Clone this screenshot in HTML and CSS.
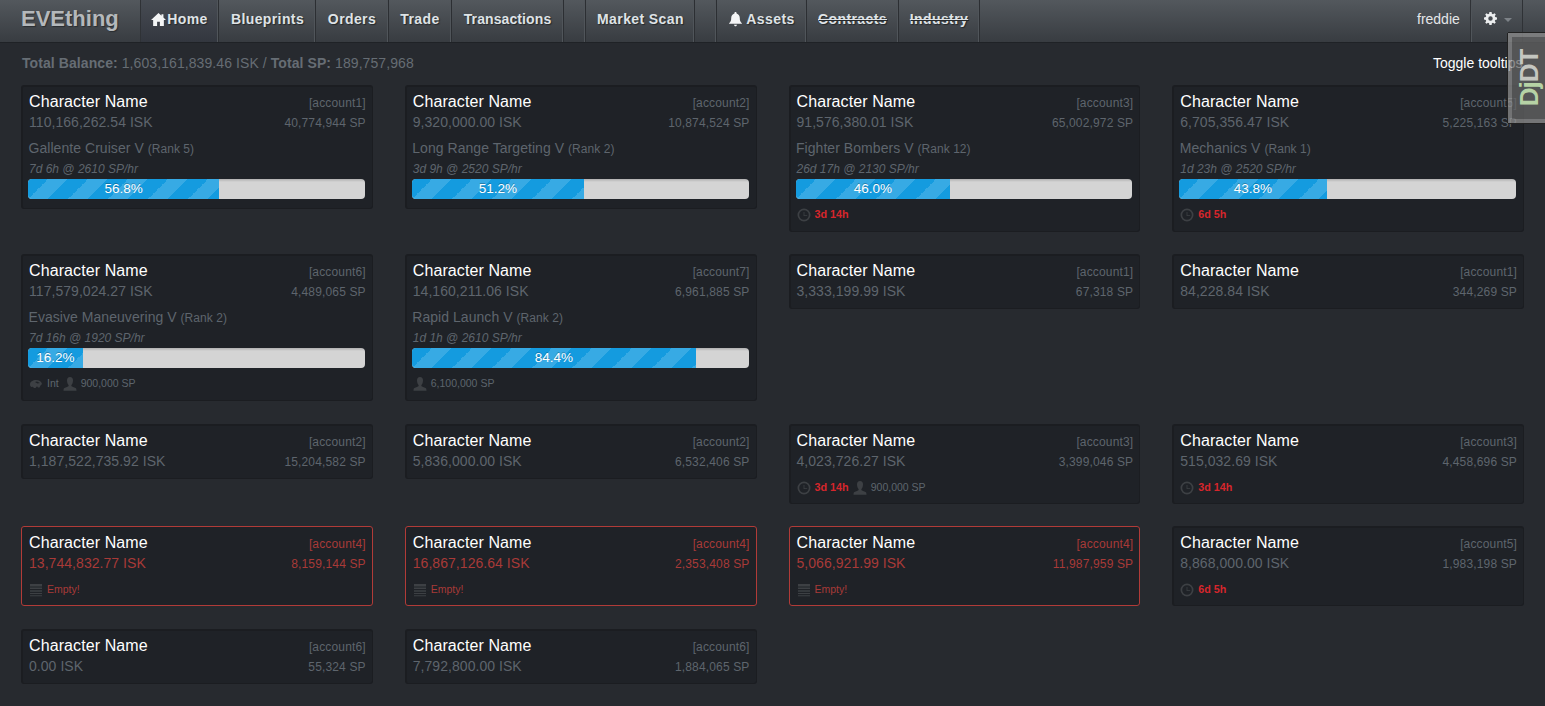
FILE: index.html
```html
<!DOCTYPE html>
<html lang="en">
<head>
    <meta charset="UTF-8">
    <title>EVEthing</title>
    <link rel="stylesheet" href="styles.css">
</head>
<body>
    <svg class="defs" width="0" height="0">
        <symbol id="i-home" viewBox="0 0 14 14"><path d="M7 1 0 7.400h2V13h3.700V9h2.600v4H12V7.400h2l-2.400-2.200V2h-1.800v1.600z"/></symbol>
        <symbol id="i-bell" viewBox="0 0 14 14"><path d="M7 0c-.6 0-1 .4-1 1v.4C4 2 3 3.600 3 5.500 3 8 2.500 9 1 10.400V11h12v-.6C11.500 9 11 8 11 5.500 11 3.600 10 2 8 1.400V1c0-.6-.4-1-1-1zM5.500 12c.2.800.8 1.400 1.500 1.400s1.300-.6 1.500-1.400z"/></symbol>
        <symbol id="i-gear" viewBox="0 0 14 14"><path fill-rule="evenodd" d="M5.800 0h2.400l.3 1.900 1.200.5L11.300 1.300 12.700 2.700l-1.100 1.600.5 1.200 1.900.3v2.400l-1.900.3-.5 1.200 1.100 1.600-1.400 1.400-1.600-1.100-1.200.5-.3 1.900H5.800l-.3-1.900-1.200-.5-1.600 1.100L1.300 11.300l1.100-1.600-.5-1.200L0 8.200V5.800l1.900-.3.5-1.200L1.300 2.700 2.700 1.300l1.600 1.100 1.200-.5zM7 4.600a2.400 2.400 0 1 0 0 4.800 2.400 2.400 0 0 0 0-4.800z"/></symbol>
        <symbol id="i-clock" viewBox="0 0 14 14"><path fill-rule="evenodd" d="M7 .5a6.500 6.500 0 1 0 0 13 6.500 6.500 0 0 0 0-13zm0 1.700a4.800 4.800 0 1 1 0 9.600 4.800 4.800 0 0 1 0-9.600z"/><path d="M6.600 4h.8v3.200h2.800V8H6.600z"/></symbol>
        <symbol id="i-user" viewBox="0 0 14 14"><path d="M7 0C5 0 4 1.500 4 3.400 4 5.500 5 7.500 5.600 8c.2.700 0 1.200-.6 1.500L1.500 11C.8 11.400.5 12 .5 13.800h13c0-1.800-.3-2.400-1-2.800L9 9.500C8.400 9.200 8.200 8.700 8.400 8 9 7.500 10 5.500 10 3.400 10 1.500 9 0 7 0z"/></symbol>
        <symbol id="i-empty" viewBox="0 0 14 14"><path d="M1 1h12v2.400H1zM1 4.500h12v1.600H1zM1 7.300h12v1.400H1zM1 9.900h12V11H1zM1 12.200h12v1H1z"/></symbol>
        <symbol id="i-int" viewBox="0 0 14 14"><path fill-rule="evenodd" d="M1 7.500C1 4.500 4 3 7 3c3 0 5.500 1.500 6 4l-1.500 1.500-1 2H9L8 9.300 6.500 11H5L3.800 9.800 2.300 10C1.500 9.500 1 8.500 1 7.500zM6 5l2.500 1.500L11 6 8 4.500z"/></symbol>
    </svg>

    <nav class="navbar">
        <a class="brand">EVEthing</a>
        <ul class="nav">
            <li class="home active"><svg class="nav-icon"><use href="#i-home"/></svg>Home</li>
            <li class="blueprints">Blueprints</li>
            <li class="orders">Orders</li>
            <li class="trade">Trade</li>
            <li class="transactions">Transactions</li>
            <li class="spacer"></li>
            <li class="scan">Market Scan</li>
            <li class="spacer"></li>
            <li class="assets"><svg class="nav-icon"><use href="#i-bell"/></svg>Assets</li>
            <li class="contracts"><s>Contracts</s></li>
            <li class="industry"><s>Industry</s></li>
        </ul>
        <div class="nav-right">
            <span class="user">freddie</span>
            <span class="settings"><svg class="gear"><use href="#i-gear"/></svg><i class="caret"></i></span>
        </div>
    </nav>

    <div class="totals">
        <div><b>Total Balance:</b> 1,603,161,839.46 ISK / <b>Total SP:</b> 189,757,968</div>
        <a class="toggle">Toggle tooltips</a>
    </div>

    <div class="chars">
        <div class="card">
            <div class="line"><span class="name">Character Name</span><span class="small">[account1]</span></div>
            <div class="line"><span>110,166,262.54 ISK</span><span class="small">40,774,944 SP</span></div>
            <div class="skill">Gallente Cruiser V <small>(Rank 5)</small></div>
            <div class="eta">7d 6h @ 2610 SP/hr</div>
            <div class="progress"><div class="bar" style="width: 56.8%">56.8%</div></div>
        </div>
        <div class="card">
            <div class="line"><span class="name">Character Name</span><span class="small">[account2]</span></div>
            <div class="line"><span>9,320,000.00 ISK</span><span class="small">10,874,524 SP</span></div>
            <div class="skill">Long Range Targeting V <small>(Rank 2)</small></div>
            <div class="eta">3d 9h @ 2520 SP/hr</div>
            <div class="progress"><div class="bar" style="width: 51.2%">51.2%</div></div>
        </div>
        <div class="card">
            <div class="line"><span class="name">Character Name</span><span class="small">[account3]</span></div>
            <div class="line"><span>91,576,380.01 ISK</span><span class="small">65,002,972 SP</span></div>
            <div class="skill">Fighter Bombers V <small>(Rank 12)</small></div>
            <div class="eta">26d 17h @ 2130 SP/hr</div>
            <div class="progress"><div class="bar" style="width: 46%">46.0%</div></div>
            <div class="notes"><svg class="ico"><use href="#i-clock"/></svg><b class="late">3d 14h</b></div>
        </div>
        <div class="card">
            <div class="line"><span class="name">Character Name</span><span class="small">[account5]</span></div>
            <div class="line"><span>6,705,356.47 ISK</span><span class="small">5,225,163 SP</span></div>
            <div class="skill">Mechanics V <small>(Rank 1)</small></div>
            <div class="eta">1d 23h @ 2520 SP/hr</div>
            <div class="progress"><div class="bar" style="width: 43.8%">43.8%</div></div>
            <div class="notes"><svg class="ico"><use href="#i-clock"/></svg><b class="late">6d 5h</b></div>
        </div>

        <div class="card">
            <div class="line"><span class="name">Character Name</span><span class="small">[account6]</span></div>
            <div class="line"><span>117,579,024.27 ISK</span><span class="small">4,489,065 SP</span></div>
            <div class="skill">Evasive Maneuvering V <small>(Rank 2)</small></div>
            <div class="eta">7d 16h @ 1920 SP/hr</div>
            <div class="progress"><div class="bar" style="width: 16.2%">16.2%</div></div>
            <div class="notes"><svg class="ico"><use href="#i-int"/></svg><span>Int</span><svg class="ico"><use href="#i-user"/></svg><span>900,000 SP</span></div>
        </div>
        <div class="card">
            <div class="line"><span class="name">Character Name</span><span class="small">[account7]</span></div>
            <div class="line"><span>14,160,211.06 ISK</span><span class="small">6,961,885 SP</span></div>
            <div class="skill">Rapid Launch V <small>(Rank 2)</small></div>
            <div class="eta">1d 1h @ 2610 SP/hr</div>
            <div class="progress"><div class="bar" style="width: 84.4%">84.4%</div></div>
            <div class="notes"><svg class="ico"><use href="#i-user"/></svg><span>6,100,000 SP</span></div>
        </div>
        <div class="card">
            <div class="line"><span class="name">Character Name</span><span class="small">[account1]</span></div>
            <div class="line"><span>3,333,199.99 ISK</span><span class="small">67,318 SP</span></div>
        </div>
        <div class="card">
            <div class="line"><span class="name">Character Name</span><span class="small">[account1]</span></div>
            <div class="line"><span>84,228.84 ISK</span><span class="small">344,269 SP</span></div>
        </div>

        <div class="card">
            <div class="line"><span class="name">Character Name</span><span class="small">[account2]</span></div>
            <div class="line"><span>1,187,522,735.92 ISK</span><span class="small">15,204,582 SP</span></div>
        </div>
        <div class="card">
            <div class="line"><span class="name">Character Name</span><span class="small">[account2]</span></div>
            <div class="line"><span>5,836,000.00 ISK</span><span class="small">6,532,406 SP</span></div>
        </div>
        <div class="card">
            <div class="line"><span class="name">Character Name</span><span class="small">[account3]</span></div>
            <div class="line"><span>4,023,726.27 ISK</span><span class="small">3,399,046 SP</span></div>
            <div class="notes"><svg class="ico"><use href="#i-clock"/></svg><b class="late">3d 14h</b><svg class="ico"><use href="#i-user"/></svg><span>900,000 SP</span></div>
        </div>
        <div class="card">
            <div class="line"><span class="name">Character Name</span><span class="small">[account3]</span></div>
            <div class="line"><span>515,032.69 ISK</span><span class="small">4,458,696 SP</span></div>
            <div class="notes"><svg class="ico"><use href="#i-clock"/></svg><b class="late">3d 14h</b></div>
        </div>

        <div class="card empty">
            <div class="line"><span class="name">Character Name</span><span class="small">[account4]</span></div>
            <div class="line"><span>13,744,832.77 ISK</span><span class="small">8,159,144 SP</span></div>
            <div class="notes"><svg class="ico"><use href="#i-empty"/></svg><span>Empty!</span></div>
        </div>
        <div class="card empty">
            <div class="line"><span class="name">Character Name</span><span class="small">[account4]</span></div>
            <div class="line"><span>16,867,126.64 ISK</span><span class="small">2,353,408 SP</span></div>
            <div class="notes"><svg class="ico"><use href="#i-empty"/></svg><span>Empty!</span></div>
        </div>
        <div class="card empty">
            <div class="line"><span class="name">Character Name</span><span class="small">[account4]</span></div>
            <div class="line"><span>5,066,921.99 ISK</span><span class="small">11,987,959 SP</span></div>
            <div class="notes"><svg class="ico"><use href="#i-empty"/></svg><span>Empty!</span></div>
        </div>
        <div class="card">
            <div class="line"><span class="name">Character Name</span><span class="small">[account5]</span></div>
            <div class="line"><span>8,868,000.00 ISK</span><span class="small">1,983,198 SP</span></div>
            <div class="notes"><svg class="ico"><use href="#i-clock"/></svg><b class="late">6d 5h</b></div>
        </div>

        <div class="card">
            <div class="line"><span class="name">Character Name</span><span class="small">[account6]</span></div>
            <div class="line"><span>0.00 ISK</span><span class="small">55,324 SP</span></div>
        </div>
        <div class="card">
            <div class="line"><span class="name">Character Name</span><span class="small">[account6]</span></div>
            <div class="line"><span>7,792,800.00 ISK</span><span class="small">1,884,065 SP</span></div>
        </div>
    </div>

    <div class="djdt"><span>Dj<b>DT</b></span></div>
</body>
</html>
```

FILE: styles.css
```css
body {
    margin: 0;
    height: 706px;
    overflow: hidden;
    background-color: #272a2f;
    color: #5e656d;
    font-family: "Liberation Sans", Arial, sans-serif;
    font-size: 14px;
    line-height: 20px;
}
.defs {
    position: absolute;
}
.navbar {
    display: flex;
    height: 42px;
    background: linear-gradient(#53585d, #383c41);
    border-bottom: 1px solid #1f2226;
}
.brand {
    width: 140px;
    padding-left: 21px;
    box-sizing: border-box;
    color: #b4b8bb;
    font-size: 22px;
    font-weight: bold;
    line-height: 38px;
    text-shadow: 1px 1px 1px #2a2d31;
}
.nav {
    display: flex;
    margin: 0;
    padding: 0;
    list-style: none;
    border-left: 1px solid #2f3236;
}
.nav li {
    display: flex;
    align-items: center;
    justify-content: center;
    box-sizing: border-box;
    height: 42px;
    padding-bottom: 4px;
    border-right: 1px solid #2c2f33;
    box-shadow: inset -1px 0 0 #50555a;
    color: #dfe3e6;
    font-weight: bold;
    letter-spacing: .4px;
    text-shadow: 1px 1px 1px #25282b;
}
.nav .active {
    background: linear-gradient(#474c53, #33373f);
}
.nav .home { width: 78px; }
.nav .blueprints { width: 97px; padding-left: 1px; }
.nav .orders { width: 73px; }
.nav .trade { width: 63px; }
.nav .transactions { width: 112px; letter-spacing: .1px; }
.nav .spacer { width: 22px; }
.nav .scan { width: 109px; padding-left: 1px; }
.nav .assets { width: 90px; }
.nav .contracts { width: 92px; }
.nav .industry { width: 81px; }
.nav-icon {
    width: 15px;
    height: 15px;
    margin-right: 1px;
    fill: #f4f5f6;
}
.assets .nav-icon {
    margin-right: 3px;
}
.nav-right {
    display: flex;
    margin: 0 22px 0 auto;
    height: 42px;
    line-height: 38px;
    color: #e4e6e8;
}
.user {
    width: 56px;
    padding-left: 2px;
    box-sizing: border-box;
    border-right: 1px solid #2f3236;
    box-shadow: 1px 0 0 #50555a;
}
.settings {
    display: flex;
    align-items: center;
    width: 52px;
    padding-left: 13px;
    box-sizing: border-box;
    border-right: 1px solid #2f3236;
}
.gear {
    width: 13px;
    height: 13px;
    fill: #eceeef;
    margin-top: -5px;
}
.caret {
    margin: -3px 0 0 7px;
    border-top: 4px solid #7d8287;
    border-left: 4px solid transparent;
    border-right: 4px solid transparent;
}
.totals {
    display: flex;
    justify-content: space-between;
    padding: 10px 37px 0 22px;
    height: 32px;
    box-sizing: border-box;
    color: #666d74;
    letter-spacing: .08px;
}
.toggle {
    color: #fff;
    letter-spacing: 0;
    margin-right: -37px;
    width: 112px;
    white-space: nowrap;
}
.chars {
    display: grid;
    grid-template-columns: repeat(4, 1fr);
    column-gap: 32px;
    row-gap: 22.5px;
    align-items: start;
    padding: 9.8px 21px 0;
}
.card {
    padding: 5px 7px 6px 6px;
    background-color: #1f2227;
    border: 1px solid #1b1d21;
    border-top-width: 2px;
    border-left-width: 2px;
    border-radius: 3px;
}
.line {
    display: flex;
    justify-content: space-between;
    align-items: baseline;
    height: 21px;
    margin-right: -1px;
    letter-spacing: .05px;
}
.line:first-child {
    height: 20px;
}
.name {
    color: #fff;
    font-size: 16px;
    letter-spacing: .1px;
}
.small {
    font-size: 12px;
    letter-spacing: .15px;
}
.skill {
    margin-top: 5px;
    height: 21px;
    margin-left: -.5px;
    letter-spacing: .05px;
}
.skill small {
    font-size: 12px;
}
.eta {
    height: 20px;
    font-size: 12px;
    font-style: italic;
}
.progress {
    height: 20px;
    margin: 0 0 3px -1px;
    overflow: hidden;
    background: linear-gradient(#b0b0b0, #d4d4d4 3px);
    border-radius: 4px;
}
.bar {
    height: 20px;
    color: #fff;
    font-size: 13.5px;
    line-height: 20px;
    text-align: center;
    text-shadow: 0 -1px 0 rgba(0, 0, 0, .25);
    background-color: #149bdf;
    background-image: linear-gradient(-45deg, rgba(255, 255, 255, .15) 25%, transparent 25%, transparent 50%, rgba(255, 255, 255, .15) 50%, rgba(255, 255, 255, .15) 75%, transparent 75%);
    background-size: 40px 40px;
}
.notes {
    display: flex;
    align-items: center;
    height: 20px;
    margin-top: 5px;
    font-size: 10.5px;
    color: #5d656d;
}
.progress + .notes {
    margin-bottom: 1px;
}
.ico {
    width: 14px;
    height: 14px;
    margin: 2px 4px 0 0;
    fill: #3d4044;
}
.notes span + .ico,
.notes b + .ico {
    margin-left: 4px;
}
.late {
    color: #d6262c;
    font-size: 10.8px;
}
.empty {
    border: 1px solid #b13b38;
    padding: 6px 7px 6px 7px;
}
.empty .line span:not(.name),
.empty .notes span {
    color: #a83a38;
}
.djdt {
    position: absolute;
    top: 33px;
    right: 0;
    display: flex;
    align-items: center;
    justify-content: center;
    width: 37px;
    height: 90px;
    box-sizing: border-box;
    background-color: rgba(100, 100, 100, .75);
    background-clip: padding-box;
    border: 4px solid rgba(150, 150, 150, .7);
    border-right: 0;
    box-shadow: -1px 0 0 #222, 0 -1px 0 #222, 0 1px 0 #222;
}
.djdt span {
    margin-left: 2px;
    color: #b6d2a5;
    font-size: 26px;
    font-weight: bold;
    letter-spacing: -1px;
    transform: rotate(-90deg);
    white-space: nowrap;
}
.djdt b {
    color: #c4c6c0;
}
```
